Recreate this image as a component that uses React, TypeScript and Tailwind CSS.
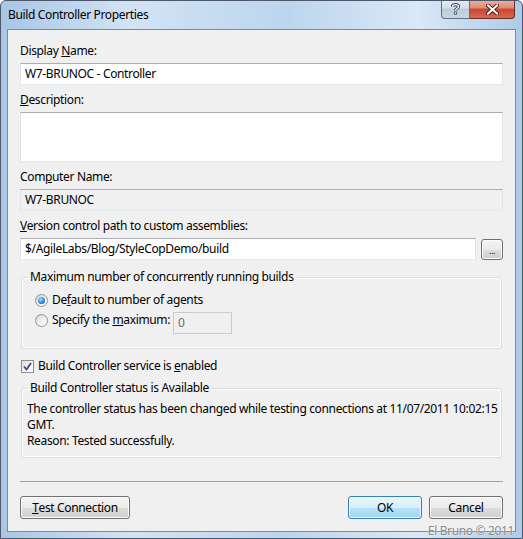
import React from 'react';

const Btn = ({ children, className = '' }: { children: React.ReactNode; className?: string }) => (
  <button
    className={`h-[23px] rounded-[3px] border border-[#707070] bg-[linear-gradient(#f2f2f2,#ebebeb_50%,#dddddd_50%,#cfcfcf)] shadow-[inset_0_0_0_1px_#fcfcfc] text-[12px] leading-4 text-black flex items-center justify-center ${className}`}
  >
    {children}
  </button>
);

const Radio = ({ checked }: { checked?: boolean }) => (
  <span className="w-[13px] h-[13px] shrink-0 rounded-full border border-[#8e8f8f] bg-[linear-gradient(135deg,#d4d4d4,#f4f4f4_60%,#ffffff)] flex items-center justify-center">
    {checked && (
      <span className="w-[7px] h-[7px] rounded-full bg-[radial-gradient(circle_at_40%_35%,#a6e3ff,#2a8ad8_55%,#0d4f93)]" />
    )}
  </span>
);

const field = 'border border-[#e2e3ea] border-t-[#abadb3] border-b-[#e3e9ef]';

export default function App() {
  return (
    <div className="w-[523px] h-[539px] flex flex-col rounded-t-[6px] border border-[#4c5867] bg-[linear-gradient(90deg,#a9c6e6,#d2e3f5_25%,#bcd5ee_55%,#dae8f7_80%,#aecae8)] font-['Noto_Sans',sans-serif] text-[12px] tracking-[-0.35px] text-black overflow-hidden">
      {/* Title bar */}
      <div className="h-[28px] flex items-start pl-[7px] pr-[7px]">
        <div className="mt-[6px] leading-4 text-[12px]">Build Controller Properties</div>
        <div className="ml-auto flex h-[19px] -mt-px">
          <div className="w-[29px] h-[19px] rounded-bl-[4px] border border-[#5f6e80] border-t-0 bg-[linear-gradient(#e6edf5,#d3dee9_45%,#bccbdb_50%,#c9d7e6)] flex items-center justify-center">
            <svg width="9" height="12" viewBox="0 0 9 12">
              <path d="M1.5 3.5 C1.5 1 7.5 1 7.5 3.5 C7.5 5.5 4.5 5.5 4.5 7.5" fill="none" stroke="#3b4654" strokeWidth="3.2" />
              <path d="M1.5 3.5 C1.5 1 7.5 1 7.5 3.5 C7.5 5.5 4.5 5.5 4.5 7.5" fill="none" stroke="#fff" strokeWidth="1.4" />
              <rect x="2.9" y="8.6" width="3.2" height="3" fill="#3b4654" />
              <rect x="3.7" y="9.4" width="1.6" height="1.4" fill="#fff" />
            </svg>
          </div>
          <div className="w-[45px] h-[19px] rounded-br-[4px] border border-[#6b2a22] border-t-0 border-l-0 bg-[linear-gradient(#eeb1a0,#e08a73_45%,#c9462f_50%,#d8694f)] flex items-center justify-center">
            <svg width="13" height="11" viewBox="0 0 13 11">
              <path d="M2 1.5 L11 9.5 M11 1.5 L2 9.5" stroke="#5a1d14" strokeWidth="4" strokeLinecap="square" />
              <path d="M2 1.5 L11 9.5 M11 1.5 L2 9.5" stroke="#fff" strokeWidth="2" strokeLinecap="square" />
            </svg>
          </div>
        </div>
      </div>

      {/* Client area */}
      <div className="relative flex-1 mx-[6px] mb-[6px] border border-[#7a8a9c] bg-[#f0f0f0] px-[12px] flex flex-col">
        <div className="mt-[13px] leading-4">
          Display <u>N</u>ame:
        </div>
        <div className={`mt-[4px] h-[22px] bg-white ${field} flex items-center px-[4px]`}>W7-BRUNOC - Controller</div>

        <div className="mt-[7px] leading-4">
          <u>D</u>escription:
        </div>
        <div className={`mt-[4px] h-[50px] bg-white ${field}`} />

        <div className="mt-[7px] leading-4">
          Com<u>p</u>uter Name:
        </div>
        <div className={`mt-[4px] h-[22px] bg-[#f0f0f0] ${field} flex items-center px-[4px]`}>W7-BRUNOC</div>

        <div className="mt-[7px] leading-4">
          <u>V</u>ersion control path to custom assemblies:
        </div>
        <div className="mt-[4px] flex items-center gap-[5px]">
          <div className={`flex-1 h-[22px] bg-white ${field} flex items-center px-[4px]`}>$/AgileLabs/Blog/StyleCopDemo/build</div>
          <button className="w-[22px] h-[21px] rounded-[3px] border border-[#707070] bg-[linear-gradient(#f2f2f2,#ebebeb_50%,#dddddd_50%,#cfcfcf)] shadow-[inset_0_0_0_1px_#fcfcfc] text-[9px] leading-none flex items-end justify-center pb-[4px]">
            ...
          </button>
        </div>

        {/* Concurrency group */}
        <fieldset className="mt-[9px] mx-px rounded-[3px] border border-[#d5dfe5] shadow-[inset_0_0_0_1px_#ffffff] pl-[13px] pb-[14px] px-[6px]">
          <legend className="px-[2px] -ml-[7px] leading-4">Maximum number of concurrently running builds</legend>
          <div className="mt-[7px] flex items-center gap-[4px] leading-4">
            <Radio checked />
            <span>
              De<u>f</u>ault to number of agents
            </span>
          </div>
          <div className="mt-[4px] flex items-start leading-4">
            <div className="flex items-center gap-[4px]">
              <Radio />
              <span>
                Specify the <u>m</u>aximum:
              </span>
            </div>
            <div className="ml-[3px] w-[59px] h-[22px] border border-[#c9cbd2] bg-[#f0f0f0] text-[#6d6d6d] flex items-center px-[4px]">0</div>
          </div>
        </fieldset>

        {/* Enabled checkbox */}
        <div className="mt-[9px] flex items-center gap-[4px] leading-4 pl-px">
          <span className="w-[13px] h-[13px] border border-[#8e8f8f] bg-[linear-gradient(135deg,#dcdcdc,#f6f6f6_60%,#ffffff)] flex items-center justify-center">
            <svg width="9" height="9" viewBox="0 0 9 9">
              <path d="M1 4.5 L3.5 7.5 L8 1" fill="none" stroke="#3b4a8f" strokeWidth="1.8" />
            </svg>
          </span>
          <span>
            Build Controller service is <u>e</u>nabled
          </span>
        </div>

        {/* Status group */}
        <fieldset className="mt-[6px] mx-px rounded-[3px] border border-[#d5dfe5] shadow-[inset_0_0_0_1px_#ffffff] pl-[5px] pb-[8px]">
          <legend className="px-[2px] ml-[1px] leading-4">Build Controller status is Available</legend>
          <div className="mt-[5px] leading-4 whitespace-nowrap">
            The controller status has been changed while testing connections at 11/07/2011 10:02:15
            <br />
            GMT.
            <br />
            Reason: Tested successfully.
          </div>
        </fieldset>

        <div className="mt-[23px] h-px bg-[#a0a0a0]" />

        <div className="mt-[14px] flex items-center">
          <Btn className="w-[110px]">
            <u>T</u>est Connection
          </Btn>
          <button className="ml-auto w-[74px] h-[23px] rounded-[3px] border border-[#3c7fb1] bg-[linear-gradient(#e9f6fd,#d6effc_50%,#b7e2f8_50%,#a1d6f3)] shadow-[inset_0_0_0_1px_#e8f7ff] text-[12px] leading-4 flex items-center justify-center">
            OK
          </button>
          <Btn className="ml-[7px] w-[74px]">Cancel</Btn>
        </div>

        <div className="absolute right-[1px] -bottom-[8px] leading-4 text-[12px] text-[#8c8c8c] [text-shadow:0_0_2px_#ffffff]">
          El Bruno © 2011
        </div>
      </div>
    </div>
  );
}
